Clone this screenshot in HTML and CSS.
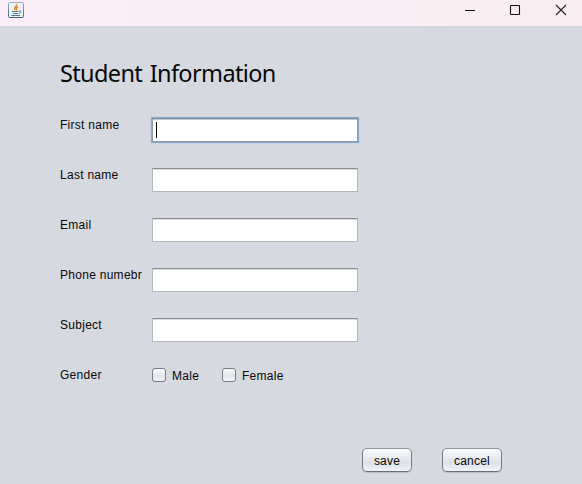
FILE: index.html
```html
<!DOCTYPE html>
<html lang="en">
<head>
<meta charset="utf-8">
<link rel="stylesheet" href="styles.css">
</head>
<body>
<header class="titlebar">
  <svg class="java" width="16" height="16" viewBox="0 0 16 16">
    <defs><linearGradient id="g" x1="0" y1="0" x2="0" y2="1"><stop offset="0" stop-color="#9aafbd"/><stop offset="1" stop-color="#3f6680"/></linearGradient></defs>
    <rect x=".5" y=".5" width="15" height="15" rx="1" fill="#f0f3f5" stroke="url(#g)"/>
    <path d="M8.7 2.2C9.4 4.4 5 5 7.2 8.2M10 4.6C7.4 6 9.2 7 8.3 8.4" fill="none" stroke="#e3842b" stroke-width="1.5"/>
    <path d="M4 9.5H10.6M5 11.5H10M3.4 13.5H12M10.8 9C13.8 8.4 13.4 11 10.8 11.4" fill="none" stroke="#55748b"/>
  </svg>
  <div class="controls">
    <svg width="12" height="12" viewBox="0 0 12 12"><path d="M1 6.5H11" stroke="#111"/></svg>
    <svg width="12" height="12" viewBox="0 0 12 12"><rect x="1.5" y="1.5" width="9" height="9" rx=".6" fill="none" stroke="#111" stroke-width="1.1"/></svg>
    <svg width="12" height="12" viewBox="0 0 12 12"><path d="M1 1 11 11M11 1 1 11" stroke="#222" stroke-width="1.1"/></svg>
  </div>
</header>
<main class="form">
  <h1 class="title">Student Information</h1>
  <div class="row"><span class="label">First name</span><div class="field focused"><span class="caret"></span></div></div>
  <div class="row"><span class="label">Last name</span><div class="field"></div></div>
  <div class="row"><span class="label">Email</span><div class="field"></div></div>
  <div class="row"><span class="label">Phone numebr</span><div class="field"></div></div>
  <div class="row"><span class="label">Subject</span><div class="field"></div></div>
  <div class="row"><span class="label">Gender</span>
    <div class="choice male"><span class="box"></span><span>Male</span></div>
    <div class="choice"><span class="box"></span><span>Female</span></div>
  </div>
  <div class="actions"><button class="btn save">save</button><button class="btn cancel">cancel</button></div>
</main>
</body>
</html>
```
FILE: styles.css
```css
* { box-sizing: border-box; }
body {
  margin: 0;
  height: 484px;
  overflow: hidden;
  background: #d6d9e0;
  color: #080808;
  font: 12px/16px "Liberation Sans", Arial, sans-serif;
  letter-spacing: .28px;
}
.titlebar {
  display: flex;
  justify-content: space-between;
  height: 26px;
  padding: 2px 15px 0 8px;
  background: linear-gradient(90deg, #fbeef8, #f8eef1);
}
.titlebar svg { display: block; }
.controls { display: flex; gap: 34px; padding-top: 2px; }
.controls svg:first-child { position: relative; left: 1px; }
.form { padding: 31px 80px 0 60px; }
.title {
  margin: 0 0 29px;
  font: 400 23.5px/32px "Noto Sans", "Open Sans", sans-serif;
  letter-spacing: -.63px;
  word-spacing: 2px;
}
.row { display: flex; height: 50px; }
.label { width: 92px; margin-top: -1px; white-space: nowrap; }
.field {
  width: 206px;
  height: 24px;
  background: #fff;
  border: 1px solid #b5b7bc;
  border-top-color: #8b8c91;
  box-shadow: inset 0 1px #dcdcdf;
}
.focused {
  padding: 3px;
  border-color: #8e9aa7;
  border-top-color: #7c8d9d;
  box-shadow: 0 0 0 1px #85add0, 0 0 1px 1px #8eb6d7, inset 0 1px #c4cbd2;
}
.caret { display: block; width: 1px; height: 16px; background: #000; }
.choice { display: flex; align-items: flex-start; gap: 6px; }
.male { width: 70px; }
.box {
  width: 14px;
  height: 14px;
  border: 1px solid #787c84;
  border-radius: 3px;
  background: linear-gradient(#fafafb, #e1e4e9 55%, #f4f6f9);
}
.actions { display: flex; justify-content: flex-end; gap: 30px; margin-top: 30px; }
.btn {
  height: 24px;
  padding: 2px 0 0;
  border: 1px solid #777b84;
  border-top-color: #91959d;
  border-bottom-color: #6a6e77;
  border-radius: 5px;
  background: linear-gradient(#fafafc, #e7e9ee 45%, #dcdfe5 60%, #f0f3f7);
  box-shadow: 0 1px 1px #b9bdc5;
  color: #080808;
  font: inherit;
  letter-spacing: .2px;
}
.save { width: 50px; }
.cancel { width: 60px; }
```
